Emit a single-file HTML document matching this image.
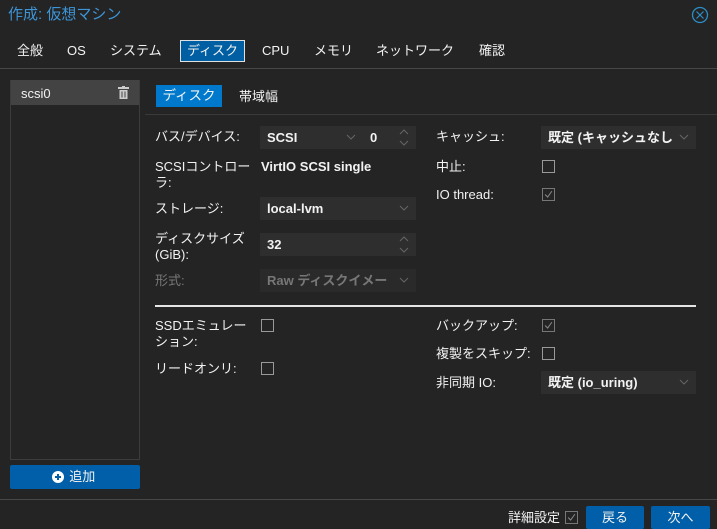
<!DOCTYPE html><html><head><meta charset="utf-8"><style>
*{box-sizing:border-box;margin:0;padding:0}
body{width:717px;height:529px;background:#242424;color:#f2f2f2;font-family:"Liberation Sans","Noto Sans CJK JP",sans-serif;font-size:13px;position:relative;overflow:hidden}
.a{position:absolute;white-space:nowrap;line-height:16px}
.in{position:absolute;background:#2e2e2e;height:23px;line-height:23px;padding-left:7px;font-weight:bold;overflow:hidden;white-space:nowrap}
.dd{position:absolute;right:0;top:0;width:22px;height:23px;background:inherit}
.cb{position:absolute;width:13px;height:13px;border:1px solid #999}
.ck{position:absolute;width:13px;height:13px;border:1px solid #777}
.lb{position:absolute;line-height:16px;white-space:nowrap}
</style></head><body>
<svg width="0" height="0" style="position:absolute"><defs>
<symbol id="chev" viewBox="0 0 22 23"><path d="M6 9l4 4 4-4" fill="none" stroke="#666" stroke-width="1"/></symbol>
<symbol id="spin" viewBox="0 0 22 23"><path d="M6 8l4-4 4 4M6 15l4 4 4-4" fill="none" stroke="#666" stroke-width="1"/></symbol>
<symbol id="tick" viewBox="0 0 13 13"><path d="M2.5 6.5l3 3 5-7" fill="none" stroke="#888" stroke-width="1.2"/></symbol>
</defs></svg>
<div class="a" style="left:8px;top:7px;font-size:15px;color:#3d95d8">作成: 仮想マシン</div>
<svg class="a" style="left:691px;top:6px" width="18" height="18"><circle cx="9" cy="9" r="7.5" fill="none" stroke="#2b8fc9" stroke-width="1.3"/><path d="M5.5 5.5L12.5 12.5M12.5 5.5L5.5 12.5" stroke="#2b8fc9" stroke-width="1.2"/></svg>
<div class="a" style="top:43px;left:17px">全般</div>
<div class="a" style="top:43px;left:67px">OS</div>
<div class="a" style="top:43px;left:110px">システム</div>
<div class="a" style="top:40px;left:180px;width:65px;height:22px;background:#005fa3;border:1px solid #e0e0e0;text-align:center;line-height:20px">ディスク</div>
<div class="a" style="top:43px;left:262px">CPU</div>
<div class="a" style="top:43px;left:314px">メモリ</div>
<div class="a" style="top:43px;left:376px">ネットワーク</div>
<div class="a" style="top:43px;left:479px">確認</div>
<div class="a" style="top:68px;left:0;width:717px;height:1px;background:#474747"></div>
<div class="a" style="left:10px;top:80px;width:130px;height:380px;border:1px solid #3c3c3c"></div>
<div class="a" style="left:11px;top:80px;width:128px;height:25px;background:#434343"></div>
<div class="a" style="left:21px;top:86px">scsi0</div>
<svg class="a" style="left:118px;top:86px" width="11" height="13"><rect x="0" y="1" width="11" height="2" fill="#ccc"/><rect x="4" y="0" width="3" height="2" fill="#ccc"/><rect x="1.5" y="4" width="8" height="9" fill="#ccc"/><path d="M4 5.5v6M7 5.5v6" stroke="#434343"/></svg>
<div class="a" style="left:10px;top:465px;width:130px;height:24px;background:#005fa8;border-radius:2px;text-align:center;line-height:24px">&nbsp;&nbsp;&nbsp;&nbsp;追加</div>
<svg class="a" style="left:52px;top:471px" width="12" height="12"><circle cx="6" cy="6" r="6" fill="#fff"/><path d="M6 3v6M3 6h6" stroke="#005fa8" stroke-width="2"/></svg>
<div class="a" style="left:156px;top:85px;width:66px;height:22px;background:#0079cc;text-align:center;line-height:22px;font-size:13.5px">ディスク</div>
<div class="a" style="left:239px;top:89px">帯域幅</div>
<div class="a" style="left:145px;top:114px;width:572px;height:1px;background:#3a3a3a"></div>
<div class="lb" style="left:155px;top:129px">バス/デバイス:</div>
<div class="in" style="left:260px;top:126px;width:103px">SCSI<svg class="dd"><use href="#chev"/></svg></div>
<div class="in" style="left:363px;top:126px;width:53px">0<svg class="dd"><use href="#spin"/></svg></div>
<div class="lb" style="left:155px;top:159px">SCSIコントロー<br>ラ:</div>
<div class="a" style="left:261px;top:159px;font-weight:bold">VirtIO SCSI single</div>
<div class="lb" style="left:155px;top:201px">ストレージ:</div>
<div class="in" style="left:260px;top:197px;width:156px">local-lvm<svg class="dd"><use href="#chev"/></svg></div>
<div class="lb" style="left:155px;top:231px">ディスクサイズ<br>(GiB):</div>
<div class="in" style="left:260px;top:233px;width:156px">32<svg class="dd"><use href="#spin"/></svg></div>
<div class="lb" style="left:155px;top:273px;color:#777">形式:</div>
<div class="in" style="left:260px;top:269px;width:156px;color:#777;background:#2a2a2a">Raw ディスクイメー<svg class="dd"><use href="#chev"/></svg></div>
<div class="lb" style="left:436px;top:129px">キャッシュ:</div>
<div class="in" style="left:541px;top:126px;width:155px">既定 (キャッシュなし<svg class="dd"><use href="#chev"/></svg></div>
<div class="lb" style="left:436px;top:159px">中止:</div>
<div class="cb" style="left:542px;top:160px"></div>
<div class="lb" style="left:436px;top:187px">IO thread:</div>
<svg class="ck" style="left:542px;top:188px"><use href="#tick"/></svg>
<div class="a" style="left:155px;top:305px;width:541px;height:2px;background:#e6e6e6"></div>
<div class="lb" style="left:155px;top:318px">SSDエミュレー<br>ション:</div>
<div class="cb" style="left:261px;top:319px"></div>
<div class="lb" style="left:155px;top:361px">リードオンリ:</div>
<div class="cb" style="left:261px;top:362px"></div>
<div class="lb" style="left:436px;top:318px">バックアップ:</div>
<svg class="ck" style="left:542px;top:319px"><use href="#tick"/></svg>
<div class="lb" style="left:436px;top:346px">複製をスキップ:</div>
<div class="cb" style="left:542px;top:347px"></div>
<div class="lb" style="left:436px;top:375px">非同期 IO:</div>
<div class="in" style="left:541px;top:371px;width:155px">既定 (io_uring)<svg class="dd"><use href="#chev"/></svg></div>
<div class="a" style="left:0;top:499px;width:717px;height:1px;background:#474747"></div>
<div class="a" style="left:508px;top:510px">詳細設定</div>
<svg class="ck" style="left:565px;top:511px"><use href="#tick"/></svg>
<div class="a" style="left:586px;top:506px;width:58px;height:23px;background:#005fa8;border-radius:2px;text-align:center;line-height:23px">戻る</div>
<div class="a" style="left:651px;top:506px;width:59px;height:23px;background:#005fa8;border-radius:2px;text-align:center;line-height:23px">次へ</div>
</body></html>
